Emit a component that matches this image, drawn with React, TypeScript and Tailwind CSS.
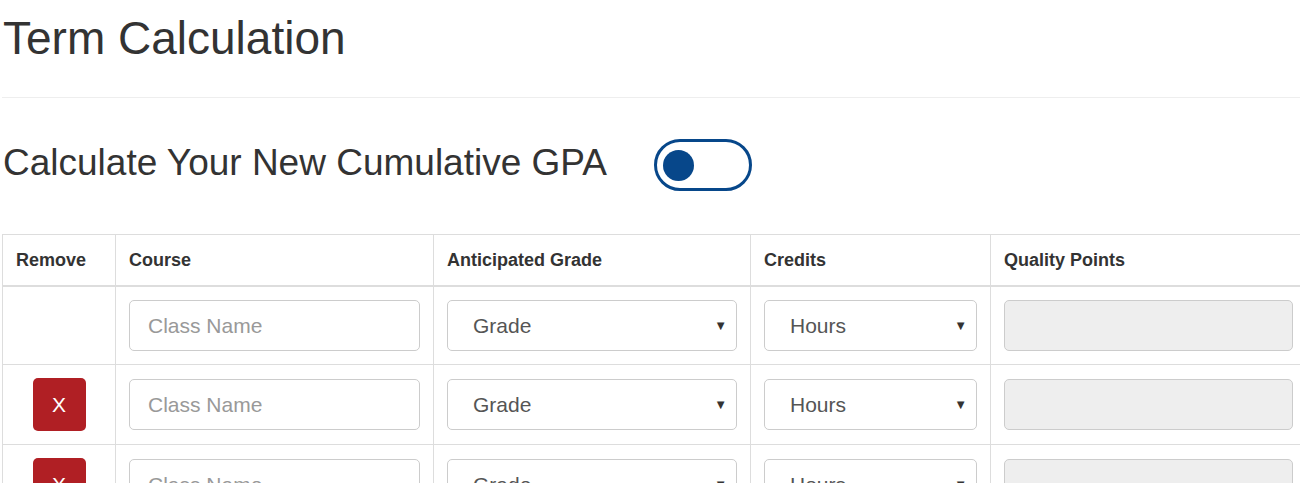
import { useState } from 'react'

interface CourseRowProps {
  removable: boolean
}

function SelectBox({ label }: { label: string }) {
  return (
    <div className="relative">
      <select
        defaultValue=""
        className="h-[51px] w-full appearance-none rounded-[5px] border border-[#ccc] bg-white pl-[25px] text-[21px] text-[#555] outline-none"
      >
        <option value="">{label}</option>
      </select>
      <span className="pointer-events-none absolute right-[10px] top-1/2 -translate-y-1/2 text-[13px] text-[#333]">
        ▼
      </span>
    </div>
  )
}

function CourseRow({ removable }: CourseRowProps) {
  return (
    <tr className="border-t border-[#ddd]">
      <td className="border border-[#ddd] px-[13px] py-[13px] text-center align-middle">
        {removable && (
          <button className="inline-flex h-[53px] w-[53px] items-center justify-center rounded-[5px] bg-[#b01f24] text-[21px] text-white">
            X
          </button>
        )}
      </td>
      <td className="border border-[#ddd] px-[13px] py-[13px]">
        <input
          placeholder="Class Name"
          className="h-[51px] w-full rounded-[5px] border border-[#ccc] px-[18px] text-[21px] text-[#555] outline-none placeholder:text-[#999]"
        />
      </td>
      <td className="border border-[#ddd] px-[13px] py-[13px]">
        <SelectBox label="Grade" />
      </td>
      <td className="border border-[#ddd] px-[13px] py-[13px]">
        <SelectBox label="Hours" />
      </td>
      <td className="border border-[#ddd] px-[13px] py-[13px]">
        <input
          disabled
          className="h-[51px] w-full rounded-[5px] border border-[#ccc] bg-[#eee]"
        />
      </td>
    </tr>
  )
}

export default function App() {
  const [cumulative, setCumulative] = useState(false)

  return (
    <div
      className="min-h-[483px] bg-white pl-[2px] text-[#333]"
      style={{ fontFamily: '"Liberation Sans", Arial, sans-serif' }}
    >
      <h1 className="ml-[1px] pt-[12px] text-[46px] leading-[52px] font-normal">
        Term Calculation
      </h1>
      <hr className="mt-[33px] border-t border-[#eee]" />

      <div className="mt-[41px] flex h-[52px] items-center gap-[47px]">
        <h2 className="mb-[4px] ml-[1px] text-[37px] leading-[40px] font-normal">
          Calculate Your New Cumulative GPA
        </h2>
        <button
          onClick={() => setCumulative(!cumulative)}
          className="flex h-[52px] w-[98px] items-center rounded-full border-[3px] border-[#07478a] px-[6px]"
        >
          <span
            className={
              cumulative
                ? 'ml-auto h-[31px] w-[31px] rounded-full bg-[#07478a]'
                : 'h-[31px] w-[31px] rounded-full bg-[#07478a]'
            }
          />
        </button>
      </div>

      <div className="mt-[43px] overflow-hidden">
        <table className="w-[1305px] table-fixed border-collapse text-left">
          <thead>
            <tr>
              <th className="w-[113px] border border-b-2 border-[#ddd] px-[13px] py-[14px] text-[18px] leading-[22px] font-bold">
                Remove
              </th>
              <th className="w-[318px] border border-b-2 border-[#ddd] px-[13px] py-[14px] text-[18px] leading-[22px] font-bold">
                Course
              </th>
              <th className="w-[317px] border border-b-2 border-[#ddd] px-[13px] py-[14px] text-[18px] leading-[22px] font-bold">
                Anticipated Grade
              </th>
              <th className="w-[240px] border border-b-2 border-[#ddd] px-[13px] py-[14px] text-[18px] leading-[22px] font-bold">
                Credits
              </th>
              <th className="border border-b-2 border-[#ddd] px-[13px] py-[14px] text-[18px] leading-[22px] font-bold">
                Quality Points
              </th>
            </tr>
          </thead>
          <tbody>
            <CourseRow removable={false} />
            <CourseRow removable />
            <CourseRow removable />
          </tbody>
        </table>
      </div>
    </div>
  )
}
